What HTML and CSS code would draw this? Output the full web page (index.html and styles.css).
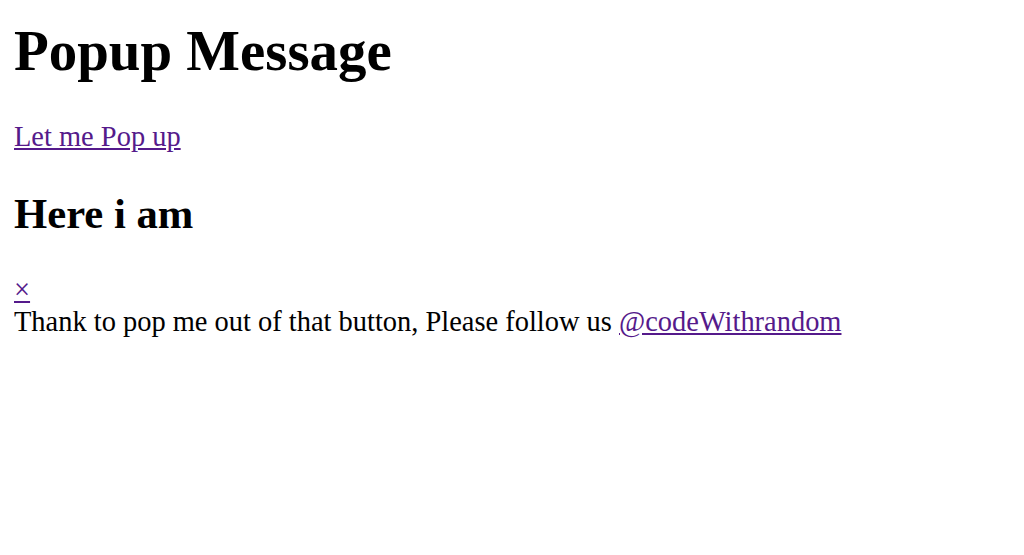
FILE: index.html
```
<!DOCTYPE html>
<html lang="en">
<head>
  <meta charset="UTF-8" />
  <meta name="viewport" content="width=device-width, initial-scale=1.0" />
  <title>Popup Message</title>
  <link rel="stylesheet" href="styles.css">
</head>
<body>
  <h1 class="title">Popup Message</h1>
  <div class="box">
    <a class="button" href="#popup1">Let me Pop up</a>
  </div>

  <div id="popup1" class="overlay">
    <div class="popup">
      <h2 class="popup-title">Here i am</h2>
      <a class="close" href="#">&times;</a>
      <div class="content">
        Thank to pop me out of that button, Please follow us <a href="#">@codeWithrandom</a>
      </div>
    </div>
  </div>
</body>
</html>
```

FILE: styles.css
```
body {
  font-family: 'Liberation Serif', 'Times New Roman', serif;
  font-size: 28.45px;
  color: #000;
  margin: 0 14px;
  background: #fff;
}
a {
  color: #551a8b;
}
.title {
  font-size: 56.9px;
  margin: 18px 0 38px;
}
.popup-title {
  font-size: 42.7px;
  margin: 36px 0;
}
.close {
  display: inline-block;
}
```
